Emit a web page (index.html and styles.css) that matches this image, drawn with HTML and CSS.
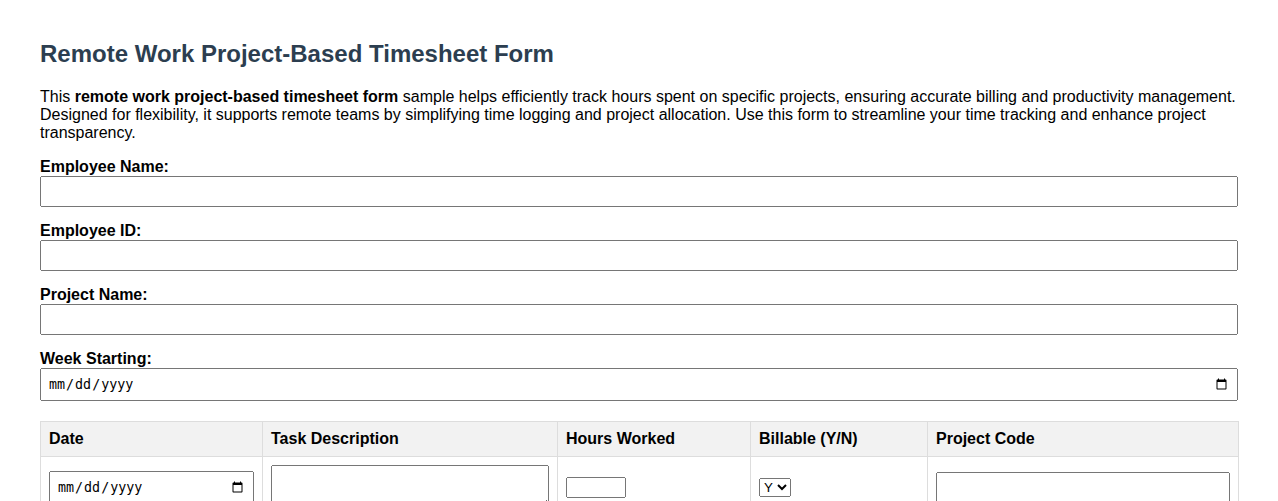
FILE: index.html
```html
<!DOCTYPE html>
<html lang="en">
<head>
<meta charset="utf-8">
<title>Remote Work Project-Based Timesheet Form</title>
<link rel="stylesheet" href="styles.css">
</head>
<body>
<div class="page">
  <h2 class="title">Remote Work Project-Based Timesheet Form</h2>
  <p class="intro">This <strong>remote work project-based timesheet form</strong> sample helps efficiently track hours spent on specific projects, ensuring accurate billing and productivity management. Designed for flexibility, it supports remote teams by simplifying time logging and project allocation. Use this form to streamline your time tracking and enhance project transparency.</p>
  <form class="form">
    <div class="group">
      <label class="label" for="emp-name">Employee Name:</label>
      <input class="field" type="text" id="emp-name">
    </div>
    <div class="group">
      <label class="label" for="emp-id">Employee ID:</label>
      <input class="field" type="text" id="emp-id">
    </div>
    <div class="group">
      <label class="label" for="proj-name">Project Name:</label>
      <input class="field" type="text" id="proj-name">
    </div>
    <div class="group">
      <label class="label" for="week">Week Starting:</label>
      <input class="field" type="date" id="week">
    </div>
    <table class="sheet">
      <colgroup>
        <col class="col-date">
        <col class="col-task">
        <col class="col-hours">
        <col class="col-bill">
        <col class="col-code">
      </colgroup>
      <thead>
        <tr>
          <th>Date</th>
          <th>Task Description</th>
          <th>Hours Worked</th>
          <th>Billable (Y/N)</th>
          <th>Project Code</th>
        </tr>
      </thead>
      <tbody>
        <tr>
          <td><input class="field" type="date"></td>
          <td><textarea class="field area" rows="2"></textarea></td>
          <td><input class="hours" type="number"></td>
          <td><select class="bill"><option>Y</option><option>N</option></select></td>
          <td><input class="field" type="text"></td>
        </tr>
      </tbody>
    </table>
  </form>
</div>
</body>
</html>
```
FILE: styles.css
```css
html, body {
  margin: 0;
  background: #fff;
}
body {
  font-family: "Liberation Sans", Arial, sans-serif;
  font-size: 16px;
  color: #000;
}
.page {
  padding: 20px 40px;
}
.title {
  font-size: 24px;
  font-weight: bold;
  color: #2c3e50;
  margin: 20px 0;
}
.intro {
  margin: 0 0 16px;
}
.group {
  margin-bottom: 15px;
}
.label {
  display: block;
  font-weight: bold;
}
.field {
  display: block;
  width: 100%;
  padding: 6px;
  box-sizing: border-box;
}
.area {
  resize: vertical;
}
.sheet {
  width: 100%;
  border-collapse: collapse;
  table-layout: fixed;
  margin-top: 20px;
}
.col-date { width: 222px; }
.col-task { width: 295px; }
.col-hours { width: 193px; }
.col-bill { width: 177px; }
.col-code { width: 311px; }
.sheet th,
.sheet td {
  border: 1px solid #ddd;
  padding: 8px;
  text-align: left;
  vertical-align: middle;
}
.sheet th {
  background: #f2f2f2;
  font-weight: bold;
}
.hours {
  width: 60px;
  box-sizing: border-box;
}
```
